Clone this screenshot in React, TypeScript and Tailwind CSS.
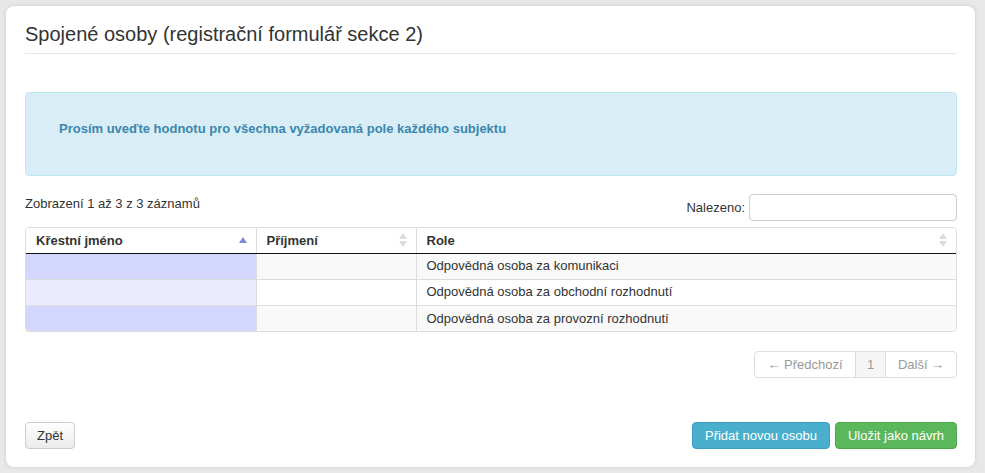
import React from 'react';

const rows = [
  { first: '', last: '', role: 'Odpovědná osoba za komunikaci' },
  { first: '', last: '', role: 'Odpovědná osoba za obchodní rozhodnutí' },
  { first: '', last: '', role: 'Odpovědná osoba za provozní rozhodnutí' },
];

const SortAsc: React.FC = () => (
  <svg width="8" height="6" viewBox="0 0 8 6" className="shrink-0">
    <path d="M4 0 L8 6 L0 6 Z" fill="#7f86e0" />
  </svg>
);

const SortBoth: React.FC = () => (
  <svg width="8" height="14" viewBox="0 0 8 14" className="shrink-0">
    <path d="M4 0 L8 6 L0 6 Z" fill="#dcdcdc" />
    <path d="M4 14 L8 8 L0 8 Z" fill="#dcdcdc" />
  </svg>
);

const HeadCell: React.FC<{ label: string; sorted?: boolean; className?: string }> = ({ label, sorted, className }) => (
  <th className={`h-[25px] pl-[10px] pr-[9px] text-left font-bold border-b border-[#111] ${className || ''}`}>
    <div className="flex items-center justify-between">
      <span>{label}</span>
      {sorted ? <SortAsc /> : <SortBoth />}
    </div>
  </th>
);

const App: React.FC = () => {
  return (
    <div className="min-h-screen bg-[#e8e8e8] p-[6px] font-['Liberation_Sans',Arial,sans-serif] text-[13px] text-[#333]">
      <div className="w-[969px] bg-white rounded-[8px] shadow-[0_0_4px_rgba(0,0,0,0.12)] pt-[16px] pl-[19px] pr-[18px] pb-[18px]">
        {/* Heading */}
        <h3 className="text-[20px] leading-[24px] text-[#333]">Spojené osoby (registrační formulář sekce 2)</h3>
        <div className="mt-[7px] border-t border-[#e5e5e5]" />

        {/* Alert */}
        <div className="mt-[38px] h-[84px] rounded-[4px] border border-[#bce8f1] bg-[#d9edf7] pl-[33px] pt-[27px]">
          <p className="font-bold leading-[18px] text-[#3a87ad]">Prosím uveďte hodnotu pro všechna vyžadovaná pole každého subjektu</p>
        </div>

        {/* Info + filter */}
        <div className="mt-[18px] flex items-start justify-between">
          <div className="mt-[1px] leading-[18px]">Zobrazení 1 až 3 z 3 záznamů</div>
          <label className="flex items-center gap-[4px]">
            <span>Nalezeno:</span>
            <input className="w-[208px] h-[27px] rounded-[4px] border border-[#ccc] px-[6px] outline-none" />
          </label>
        </div>

        {/* Table */}
        <div className="mt-[6px] rounded-[4px] border border-[#ddd] overflow-hidden">
          <table className="w-full border-collapse">
            <thead>
              <tr className="bg-white">
                <HeadCell label="Křestní jméno" sorted className="w-[230px]" />
                <HeadCell label="Příjmení" className="w-[160px] border-l border-l-[#ddd]" />
                <HeadCell label="Role" className="border-l border-l-[#ddd]" />
              </tr>
            </thead>
            <tbody>
              {rows.map((r, i) => {
                const odd = i % 2 === 0;
                return (
                  <tr key={i} className={i > 0 ? 'border-t border-[#ddd]' : ''}>
                    <td className={`h-[26px] px-[10px] ${odd ? 'bg-[#d3d6ff]' : 'bg-[#eaebff]'}`}>{r.first}</td>
                    <td className={`h-[26px] px-[10px] border-l border-[#ddd] ${odd ? 'bg-[#f9f9f9]' : 'bg-white'}`}>{r.last}</td>
                    <td className={`h-[26px] px-[10px] border-l border-[#ddd] ${odd ? 'bg-[#f9f9f9]' : 'bg-white'}`}>{r.role}</td>
                  </tr>
                );
              })}
            </tbody>
          </table>
        </div>

        {/* Pagination */}
        <div className="mt-[19px] flex justify-end">
          <div className="flex h-[27px] rounded-[4px] border border-[#ddd] text-[#999] overflow-hidden">
            <span className="w-[100px] flex items-center justify-center">← Předchozí</span>
            <span className="w-[30px] flex items-center justify-center border-l border-[#ddd] bg-[#f5f5f5]">1</span>
            <span className="w-[71px] flex items-center justify-center border-l border-[#ddd]">Další →</span>
          </div>
        </div>

        {/* Actions */}
        <div className="mt-[44px] flex items-center justify-between">
          <button className="h-[27px] w-[50px] rounded-[4px] border border-[#ccc] bg-gradient-to-b from-white to-[#ebebeb] text-[#333]">Zpět</button>
          <div className="flex gap-[5px]">
            <button className="h-[27px] w-[138px] rounded-[4px] border border-[#3a9fc0] bg-[#49afcd] text-white">Přidat novou osobu</button>
            <button className="h-[27px] w-[122px] rounded-[4px] border border-[#4aa84a] bg-[#5bb75b] text-white">Uložit jako návrh</button>
          </div>
        </div>
      </div>
    </div>
  );
};

export default App;
